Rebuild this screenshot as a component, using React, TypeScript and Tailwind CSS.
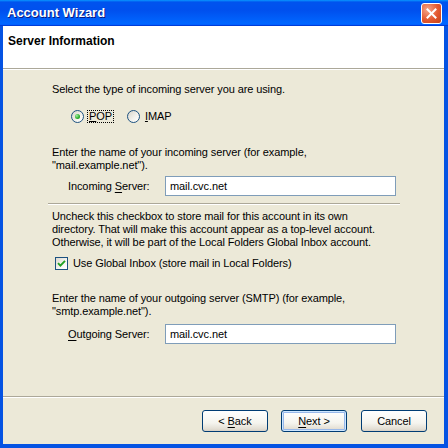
import type { ReactNode } from 'react'

const font = "font-['Liberation_Sans',Arial,sans-serif]"

function Radio({ checked = false }: { checked?: boolean }) {
  return (
    <span className="flex h-[13px] w-[13px] shrink-0 items-center justify-center rounded-full border border-[#1c5180] bg-[linear-gradient(135deg,#d8d5cb,#f4f3ee_60%,#ffffff)]">
      {checked && (
        <span className="h-[5px] w-[5px] rounded-full bg-[radial-gradient(circle_at_35%_35%,#a4eea4,#2fb22f_55%,#178017)]" />
      )}
    </span>
  )
}

function Checkbox({ checked = false }: { checked?: boolean }) {
  return (
    <span className="flex h-[13px] w-[13px] shrink-0 items-center justify-center border border-[#1c5180] bg-[linear-gradient(135deg,#dcd9d0,#f6f5f1_60%,#ffffff)]">
      {checked && (
        <svg width="9" height="9" viewBox="0 0 9 9">
          <path d="M1 4.2 L3.4 6.6 L8 1.8" fill="none" stroke="#21a121" strokeWidth="1.9" />
        </svg>
      )}
    </span>
  )
}

function Field({ label, accel, value }: { label: string; accel: string; value: string }) {
  const before = label.slice(0, label.indexOf(accel))
  const rest = label.slice(label.indexOf(accel) + 1)
  return (
    <div className="flex items-center">
      <span className="w-[117px] pl-[20px] leading-[13px]">
        {before}
        <span className="underline underline-offset-2">{accel}</span>
        {rest}
      </span>
      <div className="flex h-[20px] w-[231px] items-center border border-[#7f9db9] bg-white pl-[4px] leading-[13px]">
        {value}
      </div>
    </div>
  )
}

function XpButton({ children, focused = false }: { children: ReactNode; focused?: boolean }) {
  return (
    <button
      className={`flex h-[22px] w-[66px] items-center justify-center whitespace-pre rounded-[3px] border border-[#003c74] bg-[linear-gradient(180deg,#ffffff,#f5f4ee_60%,#e3ded3_90%,#d6d0c5)] text-[11px] leading-[13px] text-black ${
        focused ? 'shadow-[inset_0_0_0_1px_#cee7ff,inset_0_0_0_2px_#98b8ea]' : ''
      }`}
    >
      {children}
    </button>
  )
}

function Separator() {
  return <div className="h-[2px] border-t border-b border-t-[#aca899] border-b-white" />
}

export default function App() {
  return (
    <div className={`flex h-[448px] w-[448px] flex-col overflow-hidden bg-[#0553e3] text-[11px] tracking-[-0.1px] text-black ${font}`}>
      {/* Title bar */}
      <div className="flex h-[26px] shrink-0 items-center justify-between bg-[linear-gradient(180deg,#0997ff,#0053ee_8%,#0050ee_40%,#0066ff_88%,#0066ff_93%,#005bff_95%,#003dd7_96%,#003dd7)] pl-[7px] pr-[6px]">
        <span className="text-[13px] font-bold tracking-normal text-white [text-shadow:1px_1px_0_#0a1a80]">
          Account Wizard
        </span>
        <span className="flex h-[21px] w-[21px] items-center justify-center rounded-[3px] border border-white bg-[radial-gradient(circle_at_30%_30%,#f5a58a,#e3582f_55%,#c4421a)]">
          <svg width="11" height="11" viewBox="0 0 11 11">
            <path d="M1.5 1.5 L9.5 9.5 M9.5 1.5 L1.5 9.5" stroke="white" strokeWidth="2" strokeLinecap="square" />
          </svg>
        </span>
      </div>

      <div className="mb-[4px] ml-[3px] mr-[4px] flex flex-1 flex-col bg-[#ece9d8]">
        {/* Header */}
        <div className="h-[42px] shrink-0 bg-white pl-[5px] pt-[7px]">
          <span className="text-[12px] font-bold leading-[13px] tracking-normal">Server Information</span>
        </div>
        <Separator />

        {/* Page body */}
        <div className="flex-1 pl-[45px] pt-[13px]">
          <div className="flex w-[352px] flex-col">
            <p className="pl-[4px] leading-[13px]">Select the type of incoming server you are using.</p>

            <div className="mt-[14px] flex h-[13px] items-center pl-[23px]">
              <Radio checked />
              <span className="ml-[3px] border border-dotted border-black px-[1px] leading-[11px]">
                <span className="underline underline-offset-1">P</span>OP
              </span>
              <span className="ml-[13px]">
                <Radio />
              </span>
              <span className="ml-[3px] border border-transparent px-[1px] leading-[11px]">
                <span className="underline underline-offset-1">I</span>MAP
              </span>
            </div>

            <p className="mt-[23px] pl-[4px] leading-[13px]">
              Enter the name of your incoming server (for example,
              <br />
              "mail.example.net").
            </p>

            <div className="mt-[4px]">
              <Field label="Incoming Server:" accel="S" value="mail.cvc.net" />
            </div>

            <div className="mt-[7px]">
              <Separator />
            </div>

            <p className="mt-[5px] pl-[4px] leading-[13px]">
              Uncheck this checkbox to store mail for this account in its own
              <br />
              directory. That will make this account appear as a top-level account.
              <br />
              Otherwise, it will be part of the Local Folders Global Inbox account.
            </p>

            <div className="mt-[8px] flex h-[13px] items-center gap-[5px] pl-[7px]">
              <Checkbox checked />
              <span className="leading-[13px]">Use Global Inbox (store mail in Local Folders)</span>
            </div>

            <p className="mt-[22px] pl-[4px] leading-[13px]">
              Enter the name of your outgoing server (SMTP) (for example,
              <br />
              "smtp.example.net").
            </p>

            <div className="mt-[6px]">
              <Field label="Outgoing Server:" accel="O" value="mail.cvc.net" />
            </div>
          </div>
        </div>

        <Separator />

        {/* Buttons */}
        <div className="flex h-[46px] shrink-0 justify-end gap-[13px] pr-[17px] pt-[12px]">
          <XpButton>
            {'< '}
            <span className="underline underline-offset-2">B</span>
            {'ack'}
          </XpButton>
          <XpButton focused>
            <span className="underline underline-offset-2">N</span>
            {'ext >'}
          </XpButton>
          <span className="ml-px">
            <XpButton>Cancel</XpButton>
          </span>
        </div>
      </div>
    </div>
  )
}
